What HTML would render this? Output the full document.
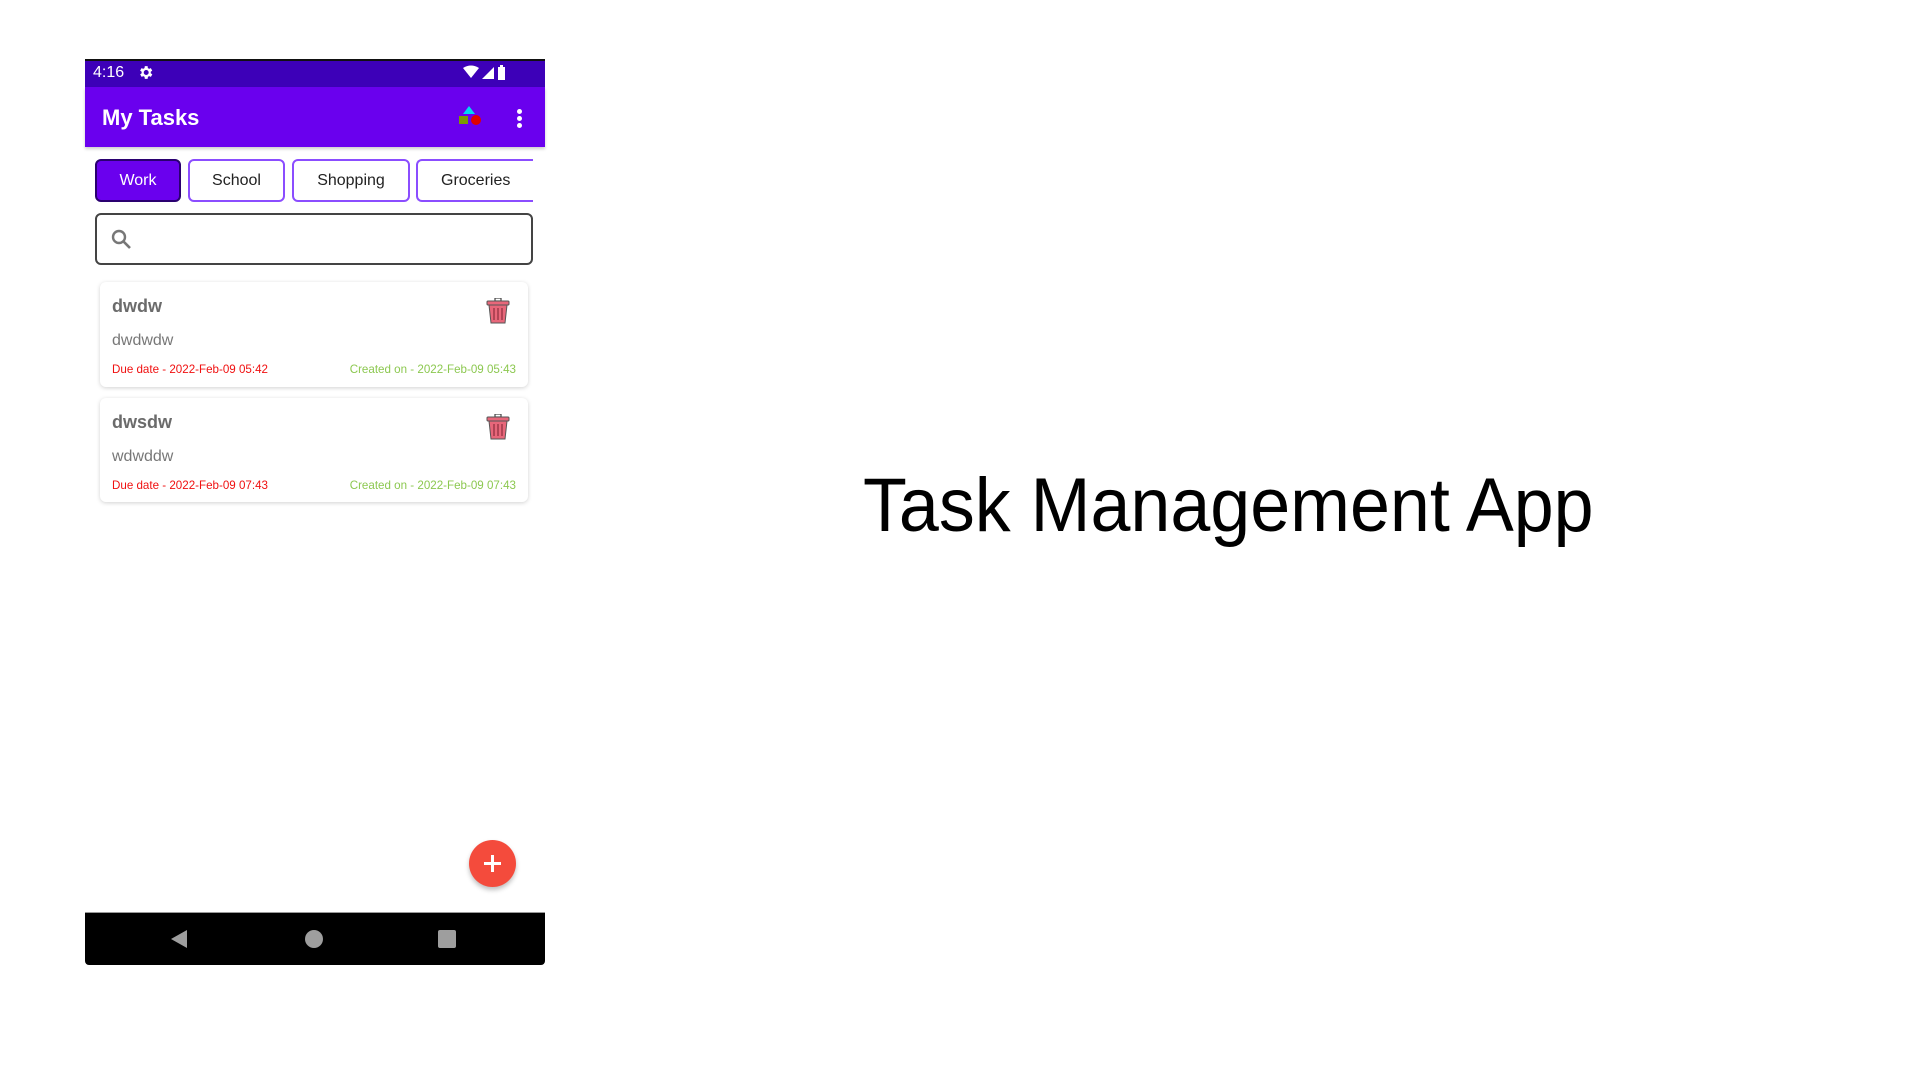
<!DOCTYPE html>
<html><head><meta charset="utf-8"><style>
*{margin:0;padding:0;box-sizing:border-box}
body{width:1920px;height:1080px;background:#fff;position:relative;overflow:hidden;font-family:"Liberation Sans",sans-serif}
.a{position:absolute}
.chip{position:absolute;top:159px;height:43px;border:2px solid #8b4dff;border-radius:6px;font-size:16px;color:#222;display:flex;align-items:center;justify-content:center;background:#fff}
.card{position:absolute;left:100px;width:428px;background:#fff;border-radius:6px;box-shadow:0 1px 4px rgba(0,0,0,.18)}
.t{position:absolute;left:12px;font-weight:bold;color:#6b6b6b;font-size:18px}
.d{position:absolute;left:12px;color:#777;font-size:16px}
.due{position:absolute;left:12px;color:#f01010;font-size:11.6px}
.cr{position:absolute;right:12px;color:#8cc850;font-size:11.6px}
</style></head><body>
<div class="a" style="left:85px;top:59px;width:460px;height:906px;background:#fff"></div>
<div class="a" style="left:85px;top:59px;width:460px;height:28px;background:#3d00b8;border-top:2px solid #111"></div>
<div class="a" style="left:93px;top:64px;color:#fff;font-size:16px">4:16</div>
<svg class="a" style="left:137px;top:64px" width="17" height="17" viewBox="0 0 24 24"><path fill="#fff" d="M19.4 13a7.5 7.5 0 000-2l2.1-1.6-2-3.5-2.5 1a7 7 0 00-1.7-1L15 3h-4l-.4 2.9a7 7 0 00-1.7 1l-2.5-1-2 3.5L6.6 11a7.5 7.5 0 000 2l-2.1 1.6 2 3.5 2.5-1a7 7 0 001.7 1L11 21h4l.4-2.9a7 7 0 001.7-1l2.5 1 2-3.5zM13 15.5a3.5 3.5 0 110-7 3.5 3.5 0 010 7z"/></svg>
<svg class="a" style="left:463px;top:65px" width="56" height="16" viewBox="0 0 56 16"><path fill="#fff" d="M0 3Q8-2 16 3L8 13z"/><path fill="#fff" d="M19 14L31 2V14z"/><rect x="35" y="2" width="7" height="13" fill="#fff"/><rect x="37" y="0" width="3" height="3" fill="#fff"/></svg>
<div class="a" style="left:85px;top:87px;width:460px;height:60px;background:#6a00ee;box-shadow:0 2px 3px rgba(0,0,0,.2)"></div>
<div class="a" style="left:102px;top:105px;color:#fff;font-size:22px;font-weight:bold">My Tasks</div>
<svg class="a" style="left:458px;top:106px" width="26" height="22" viewBox="0 0 26 22"><path fill="#00d8f0" d="M11 0L17 8H5z"/><rect x="1" y="10" width="9" height="8" fill="#7a9a00"/><circle cx="18" cy="14" r="5" fill="#e00000"/></svg>
<div class="a" style="left:517px;top:109px;width:5px;height:5px;border-radius:50%;background:#fff;box-shadow:0 7px 0 #fff,0 14px 0 #fff"></div>
<div class="chip" style="left:95px;width:86px;background:#6a00ee;border-color:#2a0070;color:#fff">Work</div>
<div class="chip" style="left:188px;width:97px">School</div>
<div class="chip" style="left:292px;width:118px">Shopping</div>
<div class="chip" style="left:416px;width:117px;border-right:none;border-radius:6px 0 0 6px;justify-content:flex-start;padding-left:23px">Groceries</div>
<div class="a" style="left:95px;top:213px;width:438px;height:52px;border:2px solid #444;border-radius:6px"></div>
<svg class="a" style="left:111px;top:229px" width="22" height="22" viewBox="0 0 22 22"><circle cx="8" cy="8" r="6" fill="none" stroke="#777" stroke-width="2.4"/><path d="M12.5 12.5L19 19" stroke="#777" stroke-width="2.6"/></svg>
<div class="card" style="top:282px;height:105px">
<div class="t" style="top:14px">dwdw</div><div class="d" style="top:50px">dwdwdw</div>
<div class="due" style="top:81px">Due date - 2022-Feb-09 05:42</div><div class="cr" style="top:81px">Created on - 2022-Feb-09 05:43</div>
<svg class="a" style="left:386px;top:16px" width="24" height="26" viewBox="0 0 24 26"><rect x="9" y="0" width="6" height="3" fill="none" stroke="#444" stroke-width="1.2"/><rect x="1" y="3" width="22" height="4" rx="1" fill="#e8677a" stroke="#555" stroke-width="1"/><path d="M3 7h18l-2 18H5z" fill="#e8677a" stroke="#555" stroke-width="1"/><path d="M8 10v12M12 10v12M16 10v12" stroke="#7a2030" stroke-width="1"/></svg>
</div>
<div class="card" style="top:398px;height:104px">
<div class="t" style="top:14px">dwsdw</div><div class="d" style="top:50px">wdwddw</div>
<div class="due" style="top:81px">Due date - 2022-Feb-09 07:43</div><div class="cr" style="top:81px">Created on - 2022-Feb-09 07:43</div>
<svg class="a" style="left:386px;top:16px" width="24" height="26" viewBox="0 0 24 26"><rect x="9" y="0" width="6" height="3" fill="none" stroke="#444" stroke-width="1.2"/><rect x="1" y="3" width="22" height="4" rx="1" fill="#e8677a" stroke="#555" stroke-width="1"/><path d="M3 7h18l-2 18H5z" fill="#e8677a" stroke="#555" stroke-width="1"/><path d="M8 10v12M12 10v12M16 10v12" stroke="#7a2030" stroke-width="1"/></svg>
</div>
<div class="a" style="left:469px;top:840px;width:47px;height:47px;border-radius:50%;background:#f44b3c;box-shadow:0 3px 5px rgba(0,0,0,.25)"></div>
<div class="a" style="left:484px;top:862px;width:17px;height:2.5px;background:#fff"></div>
<div class="a" style="left:491.3px;top:855px;width:2.5px;height:17px;background:#fff"></div>
<div class="a" style="left:85px;top:912px;width:460px;height:53px;background:#000;border-top:1px solid #999;border-radius:0 0 4px 4px"></div>
<svg class="a" style="left:171px;top:930px" width="16" height="18" viewBox="0 0 16 18"><path d="M16 0V18L0 9z" fill="#9e9e9e"/></svg>
<div class="a" style="left:305px;top:930px;width:18px;height:18px;border-radius:50%;background:#9e9e9e"></div>
<div class="a" style="left:438px;top:930px;width:18px;height:18px;border-radius:2px;background:#9e9e9e"></div>
<div class="a" style="left:863px;top:462px;font-size:76px;line-height:88px;color:#000;white-space:nowrap;transform:scaleX(0.945);transform-origin:0 0">Task Management App</div>
</body></html>
